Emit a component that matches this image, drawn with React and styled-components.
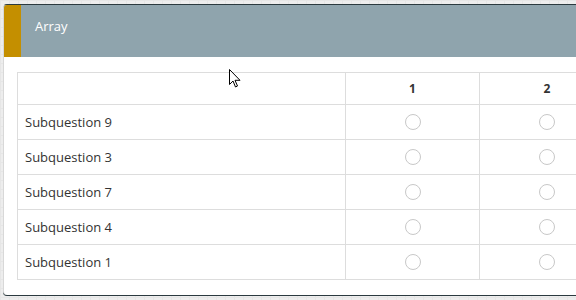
import React from "react";
import styled, { createGlobalStyle } from "styled-components";

const Global = createGlobalStyle`
    html, body {
        margin: 0;
        padding: 0;
        overflow: hidden;
    }
    body {
        background-color: #ededed;
        background-image:
            linear-gradient(#e6e6e6 1px, transparent 1px),
            linear-gradient(90deg, #e6e6e6 1px, transparent 1px);
        background-size: 9px 9px;
        font-family: "Open Sans", "Liberation Sans", sans-serif;
    }
`;

const Page = styled.div`
    position: relative;
    width: 576px;
    height: 300px;
    overflow: hidden;
    padding: 4px 0 0 3px;
    box-sizing: border-box;
`;

const Card = styled.div`
    width: 640px;
    background: #fff;
    border-radius: 4px;
    border-top: 1px solid #2b3a3f;
    border-left: 1px solid #d8d8d8;
    box-shadow: 0 1px 0 #2b3a3f;
    overflow: hidden;
`;

const Header = styled.div`
    display: flex;
    height: 52px;
    background: #8fa4ad;
`;

const Accent = styled.div`
    width: 17px;
    background: #c48f00;
`;

const Title = styled.div`
    padding: 12px 0 0 14px;
    color: #fff;
    font-size: 13px;
`;

const Body = styled.div`
    padding: 15px 0 15px 13px;
`;

const Table = styled.table`
    border-collapse: collapse;
    table-layout: fixed;
    width: 594px;
    font-size: 13px;
    color: #333;
`;

const Th = styled.th`
    width: ${(p) => p.$w}px;
    height: 31px;
    border: 1px solid #dddddd;
    font-size: 12px;
    font-weight: 700;
    color: #333;
    text-align: center;
    vertical-align: middle;
    padding: 0;
`;

const Label = styled.td`
    height: 34px;
    border: 1px solid #dddddd;
    padding: 0 0 0 7px;
    vertical-align: middle;
`;

const Cell = styled.td`
    border: 1px solid #dddddd;
    text-align: center;
    vertical-align: middle;
    padding: 0;
`;

const Radio = styled.span`
    display: inline-block;
    width: 14px;
    height: 14px;
    border: 1px solid #c8c8c8;
    border-radius: 50%;
    background: #fff;
    vertical-align: middle;
    margin-top: -4px;
`;

const Cursor = styled.svg`
    position: absolute;
    left: 229px;
    top: 69px;
`;

const rows = ["Subquestion 9", "Subquestion 3", "Subquestion 7", "Subquestion 4", "Subquestion 1"];

export default function App() {
    return (
        <Page>
            <Global />
            <Card>
                <Header>
                    <Accent />
                    <Title>Array</Title>
                </Header>
                <Body>
                    <Table>
                        <thead>
                            <tr>
                                <Th $w={327} />
                                <Th $w={133}>1</Th>
                                <Th $w={134}>2</Th>
                            </tr>
                        </thead>
                        <tbody>
                            {rows.map((r) => (
                                <tr key={r}>
                                    <Label>{r}</Label>
                                    <Cell><Radio /></Cell>
                                    <Cell><Radio /></Cell>
                                </tr>
                            ))}
                        </tbody>
                    </Table>
                </Body>
            </Card>
            <Cursor width="12" height="19" viewBox="0 0 12 19">
                <path d="M0.5 0.5 L0.5 15.5 L4 12 L6.5 18 L8.5 17 L6 11.3 L11 11.3 Z" fill="#fff" stroke="#000" strokeWidth="1" strokeLinejoin="round" />
            </Cursor>
        </Page>
    );
}
